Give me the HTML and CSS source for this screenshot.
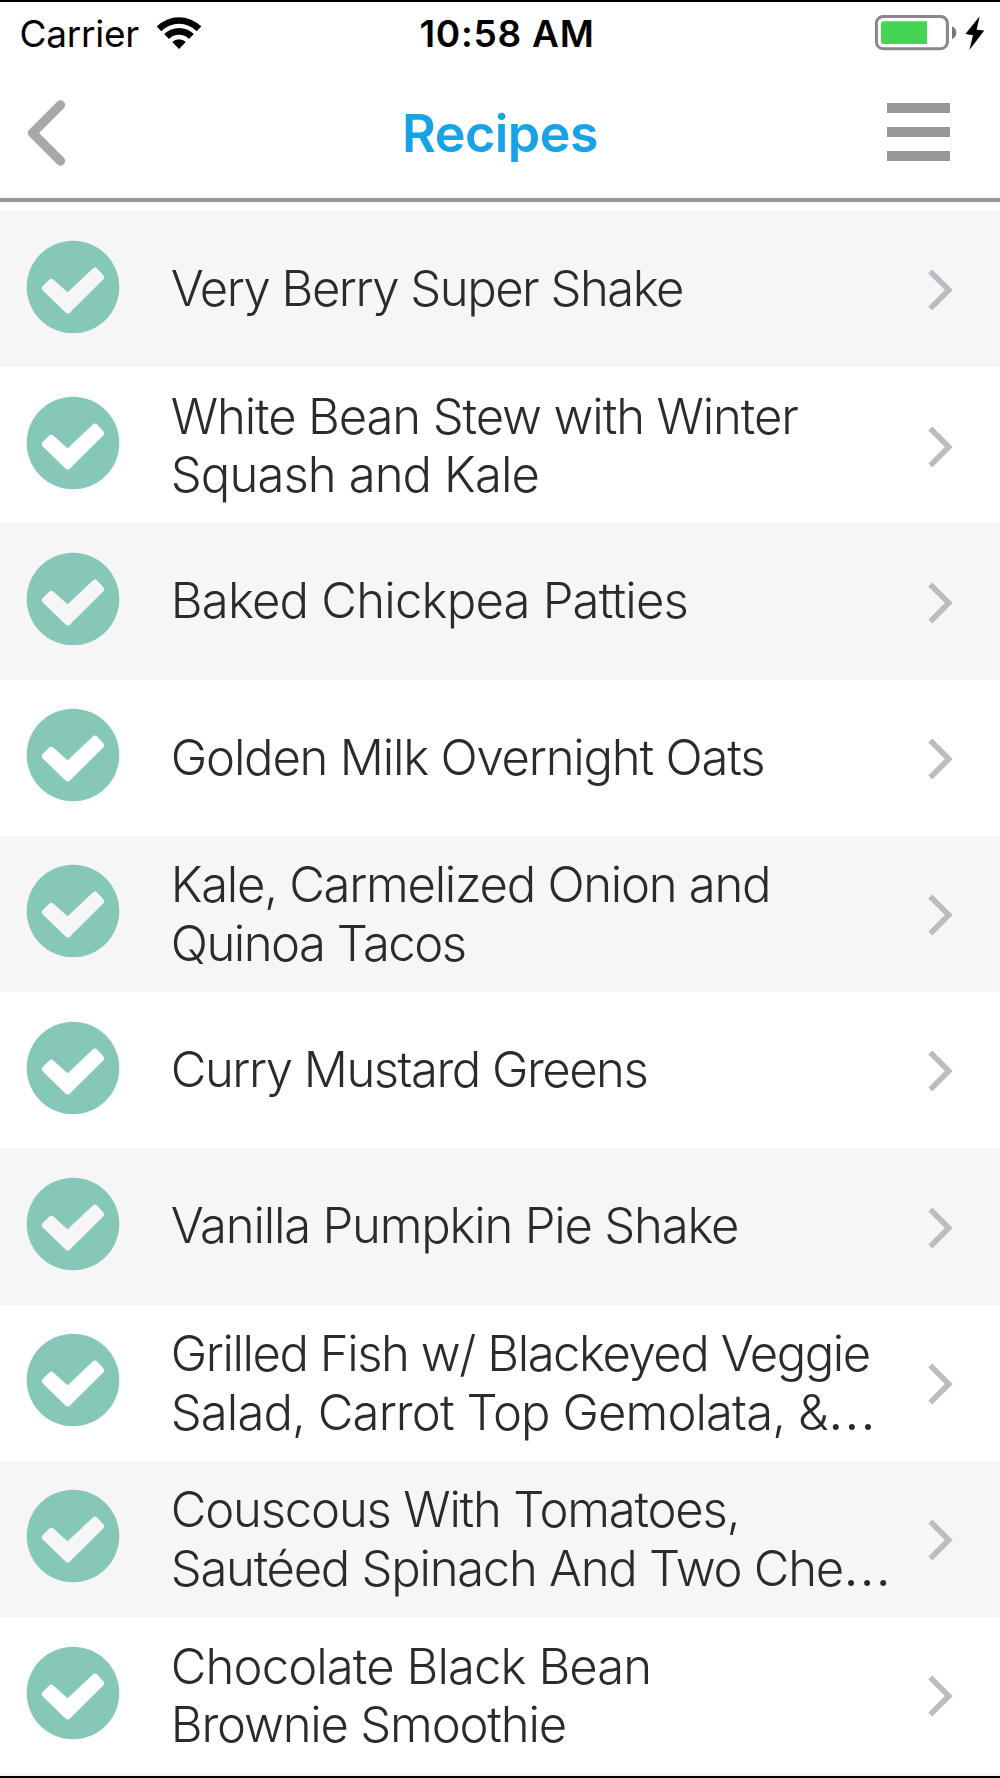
FILE: index.html
```html
<!DOCTYPE html>
<html lang="en">
<head>
<meta charset="utf-8">
<title>Recipes</title>
<link rel="stylesheet" href="styles.css">
</head>
<body>
<svg class="defs" aria-hidden="true">
  <symbol id="check" viewBox="0 0 94 94">
    <circle class="check-disc" cx="47" cy="47" r="46.3"/>
    <path class="check-mark" d="M19.5 48.2 L25.3 42.4 L41.7 57 L69 31.3 L74.5 37.3 L41.7 69.8 Z M25.3 42.4 L41.7 57 L41.7 69.8 Z"/>
  </symbol>
  <symbol id="next" viewBox="0 0 28 42">
    <path class="chevron" d="M4.3 2.5 L22.8 21 L4.3 39.5"/>
  </symbol>
</svg>
<div class="screen">
  <header class="header">
    <div class="status">
      <div class="carrier">
        <span>Carrier</span>
        <svg class="wifi" width="46" height="34" viewBox="0 0 46 34">
          <path d="M0.7 10.6 A31.5 31.5 0 0 1 45.3 10.6 L40.7 15.2 A25 25 0 0 0 5.3 15.2 Z"/>
          <path d="M8.2 18.1 A21 21 0 0 1 37.8 18.1 L33 22.9 A14.2 14.2 0 0 0 13 22.9 Z"/>
          <path d="M16.2 26.1 A9.6 9.6 0 0 1 29.8 26.1 L23 32.9 Z"/>
        </svg>
      </div>
      <div class="time">10:58 AM</div>
      <svg class="battery" width="112" height="38" viewBox="0 0 112 38">
        <rect class="battery-case" x="2.4" y="2.4" width="71" height="32.4" rx="6.8"/>
        <path class="battery-level" d="M10 7.2 H53 V30 H10 Q7 30 7 27 V10.2 Q7 7.2 10 7.2 Z"/>
        <path class="battery-cap" d="M78 12.3 Q82.3 14.5 82.3 18.8 Q82.3 23 78 25.2 Z"/>
        <path d="M105.7 2.2 L91.4 20 L99 21.3 L95.4 36 L110.3 16.6 L102.6 15.8 Z"/>
      </svg>
    </div>
    <nav class="nav">
      <svg class="back" width="44" height="70" viewBox="0 0 44 70"><path d="M38.5 7 L10.5 35 L38.5 63"/></svg>
      <h1 class="title">Recipes</h1>
      <div class="menu"><span class="bar"></span><span class="bar"></span><span class="bar"></span></div>
    </nav>
  </header>
  <main class="list">
    <div class="row"><svg class="check"><use href="#check"/></svg><div class="name single"><span class="t15">Very Berry Super Shake</span></div><svg class="next"><use href="#next"/></svg></div>
    <div class="row"><svg class="check"><use href="#check"/></svg><div class="name"><span class="t11">White Bean Stew with Winter</span><span class="t09">Squash and Kale</span></div><svg class="next"><use href="#next"/></svg></div>
    <div class="row"><svg class="check"><use href="#check"/></svg><div class="name single"><span class="t08">Baked Chickpea Patties</span></div><svg class="next"><use href="#next"/></svg></div>
    <div class="row"><svg class="check"><use href="#check"/></svg><div class="name single"><span class="t12">Golden Milk Overnight Oats</span></div><svg class="next"><use href="#next"/></svg></div>
    <div class="row"><svg class="check"><use href="#check"/></svg><div class="name"><span class="t13">Kale, Carmelized Onion and</span><span class="t15">Quinoa Tacos</span></div><svg class="next"><use href="#next"/></svg></div>
    <div class="row"><svg class="check"><use href="#check"/></svg><div class="name single"><span class="t15">Curry Mustard Greens</span></div><svg class="next"><use href="#next"/></svg></div>
    <div class="row"><svg class="check"><use href="#check"/></svg><div class="name single"><span class="t12">Vanilla Pumpkin Pie Shake</span></div><svg class="next"><use href="#next"/></svg></div>
    <div class="row"><svg class="check"><use href="#check"/></svg><div class="name"><span class="t14">Grilled Fish w/ Blackeyed Veggie</span><span class="t09">Salad, Carrot Top Gemolata, &amp;<span class="more">…</span></span></div><svg class="next"><use href="#next"/></svg></div>
    <div class="row"><svg class="check"><use href="#check"/></svg><div class="name"><span class="t12">Couscous With Tomatoes,</span><span class="t13">Sautéed Spinach And Two Che<span class="more">…</span></span></div><svg class="next"><use href="#next"/></svg></div>
    <div class="row"><svg class="check"><use href="#check"/></svg><div class="name"><span class="t09">Chocolate Black Bean</span><span class="t12">Brownie Smoothie</span></div><svg class="next"><use href="#next"/></svg></div>
  </main>
</div>
</body>
</html>
```
FILE: styles.css
```css
* { box-sizing: border-box; }
body { margin: 0; background: #fff; font-family: Inter, "Liberation Sans", sans-serif; color: #000; }
svg { display: block; flex: none; }
.defs { display: none; }

.screen { display: flex; flex-direction: column; width: 1000px; height: 1778px; border-top: 2px solid #000; border-bottom: 2px solid #000; background: #f6f6f6; overflow: hidden; }
.header { flex: none; height: 209px; background: #fff; }

.status { display: grid; grid-template-columns: 400px 1fr 400px; align-items: center; height: 64px; font-size: 37px; line-height: 44px; }
.carrier { display: flex; align-items: center; gap: 16.5px; padding-left: 19.5px; letter-spacing: -0.25px; }
.wifi { margin-bottom: 2px; }
.time { padding-left: 14px; text-align: center; font-weight: 600; letter-spacing: 0.75px; white-space: nowrap; }
.battery { justify-self: end; margin: 0 14px 2px 0; }
.battery-case { fill: none; stroke: #888; stroke-width: 3; }
.battery-level { fill: #44d653; }
.battery-cap { fill: #777; }

.nav { display: grid; grid-template-columns: 300px 1fr 300px; align-items: center; height: 136px; padding-top: 4px; border-bottom: 4px solid #999; }
.back { margin: 0 0 2px 22.4px; fill: none; stroke: #a8a8a8; stroke-width: 9.4; stroke-linecap: round; stroke-linejoin: round; }
.title { margin: 0; text-align: center; font-size: 52px; line-height: 60px; font-weight: 600; letter-spacing: -0.5px; color: #18a3e8; }
.menu { display: flex; flex-direction: column; gap: 14px; justify-self: end; margin: 0 50px 5px 0; }
.bar { width: 63px; height: 10px; background: #989898; }

.list { display: grid; grid-template-rows: repeat(10, 156.22px); flex: none; }
.row { display: flex; align-items: center; padding: 0 46px 0 25.5px; background: #fff; --row: #fff; }
.row:nth-child(odd) { background: #f6f6f6; --row: #f6f6f6; }
.check { width: 94px; height: 94px; margin-bottom: 5px; }
.check-disc { fill: #86c8b7; }
.check-mark { fill: var(--row); stroke: var(--row); stroke-width: 7; stroke-linejoin: round; }
.name { flex: 1; display: flex; flex-direction: column; padding: 2px 0 0 51.3px; font-size: 49px; line-height: 58.5px; font-weight: 300; color: #2b2b2b; white-space: nowrap; }
.single { margin-bottom: 2px; }
.more { font-size: 57px; line-height: 0; }
.next { width: 28px; height: 42px; margin-top: 2.4px; }
.chevron { fill: none; stroke: #bcbbc2; stroke-width: 5.6; }

.t08 { letter-spacing: -0.78px; }
.t09 { letter-spacing: -0.9px; }
.t11 { letter-spacing: -1.12px; }
.t12 { letter-spacing: -1.2px; }
.t13 { letter-spacing: -1.28px; }
.t14 { letter-spacing: -1.44px; }
.t15 { letter-spacing: -1.5px; }
```
